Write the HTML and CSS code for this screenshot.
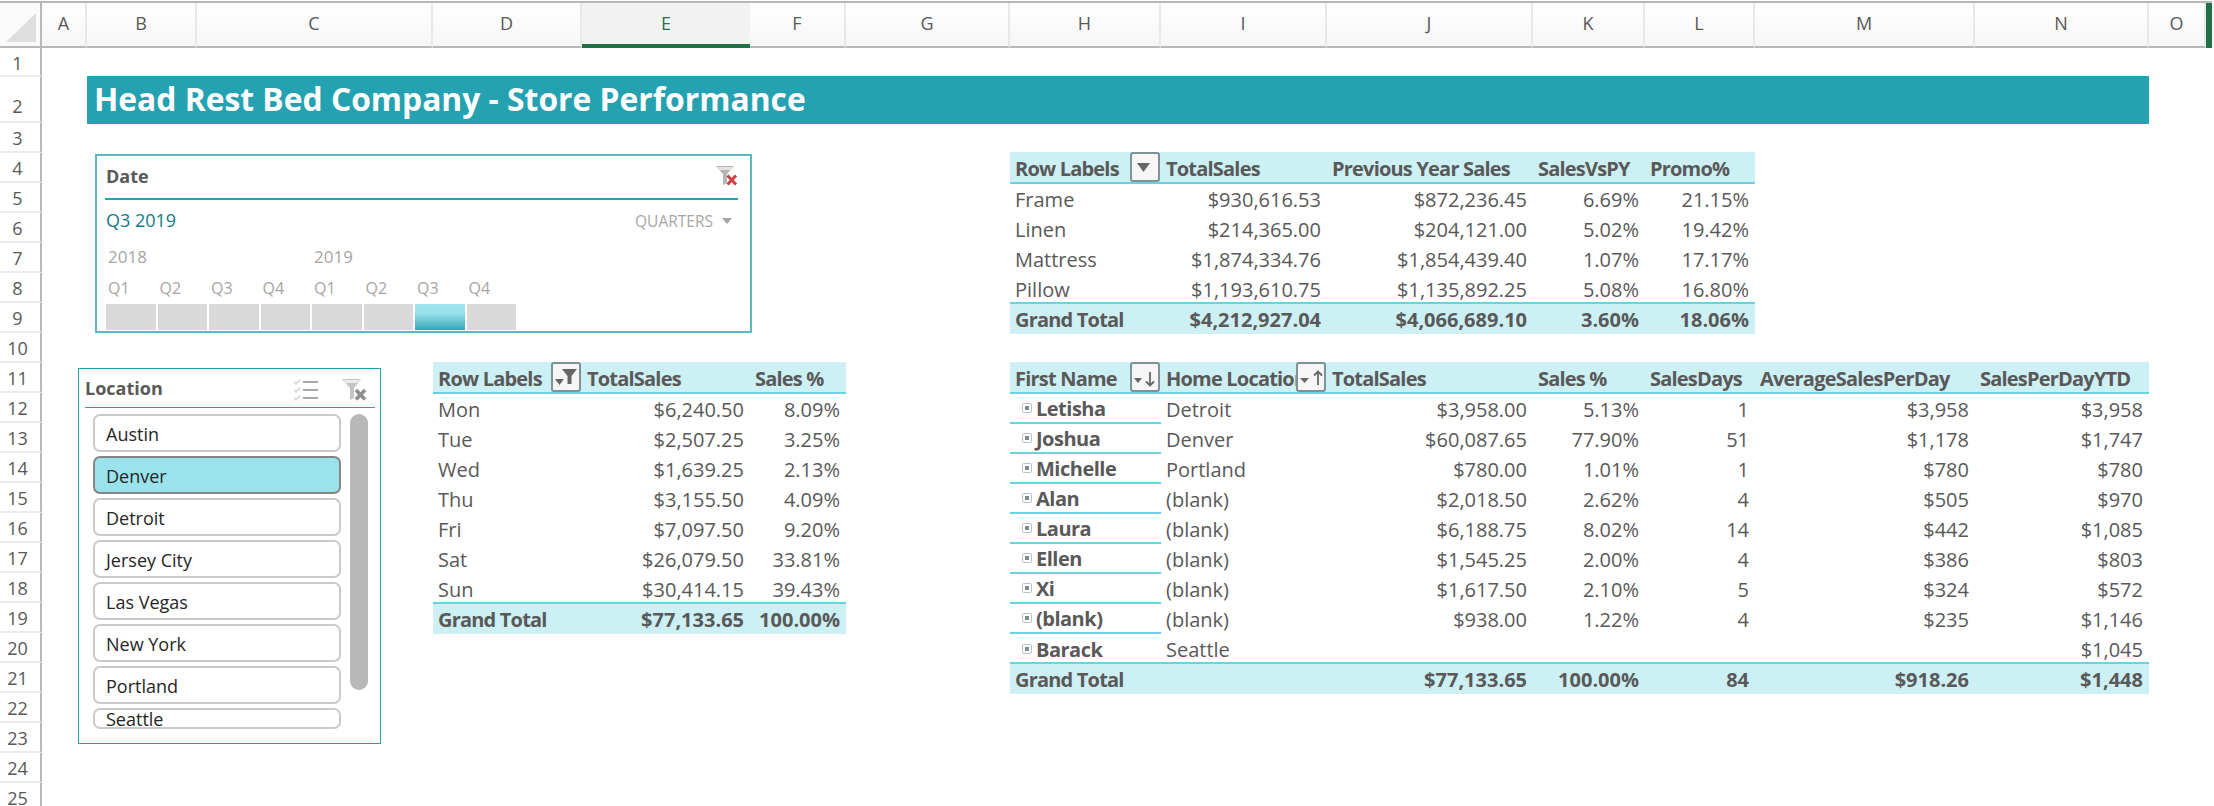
FILE: index.html
```html
<!DOCTYPE html>
<html lang="en">
  <head>
    <meta charset="UTF-8" />
    <title>Store Performance</title>
    <link rel="stylesheet" href="styles.css">
  </head>
  <body>
    <div class="sheet">
      <!-- column headers -->
      <div class="corner">
        <svg width="40" height="45" viewBox="0 0 40 45"><path d="M36 10V39H6Z" fill="#dedede" /></svg>
      </div>
      <div class="col-head">A</div>
      <div class="col-head">B</div>
      <div class="col-head">C</div>
      <div class="col-head">D</div>
      <div class="col-head active">E</div>
      <div class="col-head">F</div>
      <div class="col-head">G</div>
      <div class="col-head">H</div>
      <div class="col-head">I</div>
      <div class="col-head">J</div>
      <div class="col-head">K</div>
      <div class="col-head">L</div>
      <div class="col-head">M</div>
      <div class="col-head">N</div>
      <div class="col-head">O</div>
      <div class="edge"></div>

      <!-- row headers -->
      <div class="row-head">1</div>
      <div class="row-head bottom">2</div>
      <div class="row-head">3</div>
      <div class="row-head">4</div>
      <div class="row-head">5</div>
      <div class="row-head">6</div>
      <div class="row-head">7</div>
      <div class="row-head">8</div>
      <div class="row-head">9</div>
      <div class="row-head">10</div>
      <div class="row-head">11</div>
      <div class="row-head">12</div>
      <div class="row-head">13</div>
      <div class="row-head">14</div>
      <div class="row-head">15</div>
      <div class="row-head">16</div>
      <div class="row-head">17</div>
      <div class="row-head">18</div>
      <div class="row-head">19</div>
      <div class="row-head">20</div>
      <div class="row-head">21</div>
      <div class="row-head">22</div>
      <div class="row-head">23</div>
      <div class="row-head">24</div>
      <div class="row-head">25</div>

      <h1 class="title">Head Rest Bed Company - Store Performance</h1>

      <!-- date timeline slicer -->
      <section class="timeline">
        <div class="timeline-head">
          <span class="slicer-name">Date</span>
          <svg class="clear-icon" width="24" height="22" viewBox="0 0 24 22">
            <path d="M2 1H20L13 9V18L9 20V9Z" fill="#b5b5b5" />
            <path d="M3 2H19L16 5H6Z" fill="#e4e4e4" />
            <path d="M13.500 10.500L22 19.500M22 10.500L13.500 19.500" stroke="#cf3f45" stroke-width="3" />
          </svg>
        </div>
        <div class="timeline-range">
          <span class="range-label">Q3 2019</span>
          <span class="range-level">QUARTERS <i class="level-arrow"></i></span>
        </div>
        <div class="years">
          <span>2018</span>
          <span>2019</span>
        </div>
        <div class="quarters">
          <span>Q1</span><span>Q2</span><span>Q3</span><span>Q4</span>
          <span>Q1</span><span>Q2</span><span>Q3</span><span>Q4</span>
        </div>
        <div class="tiles">
          <i class="tile"></i><i class="tile"></i><i class="tile"></i><i class="tile"></i>
          <i class="tile"></i><i class="tile"></i><i class="tile on"></i><i class="tile"></i>
        </div>
      </section>

      <!-- location slicer -->
      <section class="slicer">
        <div class="slicer-head">
          <span class="slicer-name">Location</span>
          <svg class="multi-icon" width="26" height="22" viewBox="0 0 26 22">
            <path d="M1 3L3 5L7 0.500M1 11L3 13L7 8.500M1 19L3 21L7 16.500" fill="none" stroke="#d4d4d4" stroke-width="1.500" />
            <path d="M10 3H25M10 11H25M10 19H25" stroke="#a8a8a8" stroke-width="2" />
          </svg>
          <svg class="clear-icon" width="26" height="23" viewBox="0 0 26 23">
            <path d="M1 1H20L13 10V20L9 22V10Z" fill="#c4c4c4" />
            <path d="M2 2H19L16 5H5Z" fill="#ececec" />
            <path d="M15 12L24 21.500M24 12L15 21.500" stroke="#8e8e8e" stroke-width="3.500" />
          </svg>
        </div>
        <div class="slicer-body">
          <ul class="items">
            <li class="item">Austin</li>
            <li class="item on">Denver</li>
            <li class="item">Detroit</li>
            <li class="item">Jersey City</li>
            <li class="item">Las Vegas</li>
            <li class="item">New York</li>
            <li class="item">Portland</li>
            <li class="item cut">Seattle</li>
          </ul>
          <div class="scrollbar"></div>
        </div>
      </section>

      <!-- sales by weekday -->
      <div class="pivot pivot-days">
        <div class="row head">
          <span class="cell">Row Labels
            <span class="filter-btn">
              <svg width="26" height="26" viewBox="0 0 26 26">
                <path d="M2 15H11L6.500 21Z" fill="#666" />
                <path d="M9 5H24L18.500 12V20H14.500V12Z" fill="#666" />
              </svg>
            </span>
          </span>
          <span class="cell">TotalSales</span>
          <span class="cell">Sales %</span>
        </div>
        <div class="row"><span class="cell">Mon</span><span class="cell num">$6,240.50</span><span class="cell num">8.09%</span></div>
        <div class="row"><span class="cell">Tue</span><span class="cell num">$2,507.25</span><span class="cell num">3.25%</span></div>
        <div class="row"><span class="cell">Wed</span><span class="cell num">$1,639.25</span><span class="cell num">2.13%</span></div>
        <div class="row"><span class="cell">Thu</span><span class="cell num">$3,155.50</span><span class="cell num">4.09%</span></div>
        <div class="row"><span class="cell">Fri</span><span class="cell num">$7,097.50</span><span class="cell num">9.20%</span></div>
        <div class="row"><span class="cell">Sat</span><span class="cell num">$26,079.50</span><span class="cell num">33.81%</span></div>
        <div class="row"><span class="cell">Sun</span><span class="cell num">$30,414.15</span><span class="cell num">39.43%</span></div>
        <div class="row total"><span class="cell">Grand Total</span><span class="cell num">$77,133.65</span><span class="cell num">100.00%</span></div>
      </div>

      <!-- sales by product -->
      <div class="pivot pivot-products">
        <div class="row head">
          <span class="cell">Row Labels
            <span class="filter-btn">
              <svg width="26" height="26" viewBox="0 0 26 26"><path d="M5 9H18L11.500 18Z" fill="#666" /></svg>
            </span>
          </span>
          <span class="cell">TotalSales</span>
          <span class="cell">Previous Year Sales</span>
          <span class="cell">SalesVsPY</span>
          <span class="cell">Promo%</span>
        </div>
        <div class="row"><span class="cell">Frame</span><span class="cell num">$930,616.53</span><span class="cell num">$872,236.45</span><span class="cell num">6.69%</span><span class="cell num">21.15%</span></div>
        <div class="row"><span class="cell">Linen</span><span class="cell num">$214,365.00</span><span class="cell num">$204,121.00</span><span class="cell num">5.02%</span><span class="cell num">19.42%</span></div>
        <div class="row"><span class="cell">Mattress</span><span class="cell num">$1,874,334.76</span><span class="cell num">$1,854,439.40</span><span class="cell num">1.07%</span><span class="cell num">17.17%</span></div>
        <div class="row"><span class="cell">Pillow</span><span class="cell num">$1,193,610.75</span><span class="cell num">$1,135,892.25</span><span class="cell num">5.08%</span><span class="cell num">16.80%</span></div>
        <div class="row total"><span class="cell">Grand Total</span><span class="cell num">$4,212,927.04</span><span class="cell num">$4,066,689.10</span><span class="cell num">3.60%</span><span class="cell num">18.06%</span></div>
      </div>

      <!-- sales by person -->
      <div class="pivot pivot-people">
        <div class="row head">
          <span class="cell">First Name
            <span class="filter-btn">
              <svg width="26" height="26" viewBox="0 0 26 26">
                <path d="M2 14H10L6 19Z" fill="#666" />
                <path d="M18 8V21M14 17.500L18 21.500L22 17.500" fill="none" stroke="#666" stroke-width="1.800" />
              </svg>
            </span>
          </span>
          <span class="cell">Home Location
            <span class="filter-btn">
              <svg width="26" height="26" viewBox="0 0 26 26">
                <path d="M2 14H11L6.500 19Z" fill="#666" />
                <path d="M20 21V8M16 11.500L20 7.500L24 11.500" fill="none" stroke="#666" stroke-width="1.800" />
              </svg>
            </span>
          </span>
          <span class="cell">TotalSales</span>
          <span class="cell">Sales %</span>
          <span class="cell">SalesDays</span>
          <span class="cell">AverageSalesPerDay</span>
          <span class="cell">SalesPerDayYTD</span>
        </div>
        <div class="row"><span class="cell name"><i class="expand"></i>Letisha</span><span class="cell">Detroit</span><span class="cell num">$3,958.00</span><span class="cell num">5.13%</span><span class="cell num">1</span><span class="cell num">$3,958</span><span class="cell num">$3,958</span></div>
        <div class="row"><span class="cell name"><i class="expand"></i>Joshua</span><span class="cell">Denver</span><span class="cell num">$60,087.65</span><span class="cell num">77.90%</span><span class="cell num">51</span><span class="cell num">$1,178</span><span class="cell num">$1,747</span></div>
        <div class="row"><span class="cell name"><i class="expand"></i>Michelle</span><span class="cell">Portland</span><span class="cell num">$780.00</span><span class="cell num">1.01%</span><span class="cell num">1</span><span class="cell num">$780</span><span class="cell num">$780</span></div>
        <div class="row"><span class="cell name"><i class="expand"></i>Alan</span><span class="cell">(blank)</span><span class="cell num">$2,018.50</span><span class="cell num">2.62%</span><span class="cell num">4</span><span class="cell num">$505</span><span class="cell num">$970</span></div>
        <div class="row"><span class="cell name"><i class="expand"></i>Laura</span><span class="cell">(blank)</span><span class="cell num">$6,188.75</span><span class="cell num">8.02%</span><span class="cell num">14</span><span class="cell num">$442</span><span class="cell num">$1,085</span></div>
        <div class="row"><span class="cell name"><i class="expand"></i>Ellen</span><span class="cell">(blank)</span><span class="cell num">$1,545.25</span><span class="cell num">2.00%</span><span class="cell num">4</span><span class="cell num">$386</span><span class="cell num">$803</span></div>
        <div class="row"><span class="cell name"><i class="expand"></i>Xi</span><span class="cell">(blank)</span><span class="cell num">$1,617.50</span><span class="cell num">2.10%</span><span class="cell num">5</span><span class="cell num">$324</span><span class="cell num">$572</span></div>
        <div class="row"><span class="cell name"><i class="expand"></i>(blank)</span><span class="cell">(blank)</span><span class="cell num">$938.00</span><span class="cell num">1.22%</span><span class="cell num">4</span><span class="cell num">$235</span><span class="cell num">$1,146</span></div>
        <div class="row"><span class="cell name last"><i class="expand"></i>Barack</span><span class="cell">Seattle</span><span class="cell num"></span><span class="cell num"></span><span class="cell num"></span><span class="cell num"></span><span class="cell num">$1,045</span></div>
        <div class="row total"><span class="cell">Grand Total</span><span class="cell"></span><span class="cell num">$77,133.65</span><span class="cell num">100.00%</span><span class="cell num">84</span><span class="cell num">$918.26</span><span class="cell num">$1,448</span></div>
      </div>
    </div>
  </body>
</html>
```

FILE: styles.css
```css
* {
  box-sizing: border-box;
  margin: 0px;
  padding: 0px;
}

html, body {
  height: 100%;
  overflow: hidden;
}

body {
  background-color: #fff;
  color: #595959;
  font-family: "Open Sans", sans-serif;
  font-size: 20px;
}

.sheet {
  display: grid;
  width: 2212px;
  margin-top: 1px;
  border-top: 2px solid #b8b8b8;
  grid-template-columns: 42px 45px 110px 236px 149px 168px 96px 164px 151px 166px 206px 112px 110px 220px 174px 57px 6px;
  grid-template-rows: 45px 29px 46px repeat(23, 30px);
}

/* headers */
.corner {
  grid-column: 1;
  grid-row: 1;
  background-color: #fafafa;
  border-right: 2px solid #b8b8b8;
  border-bottom: 2px solid #b8b8b8;
}

.col-head {
  grid-row: 1;
  background: linear-gradient(#fff, #f6f6f6);
  border-right: 2px solid #e8e8e8;
  border-bottom: 2px solid #b8b8b8;
  text-align: center;
  font-size: 18px;
  line-height: 41px;
}

.col-head.active {
  background: #f2f2f2;
  border-right: none;
  border-bottom: 4px solid #1f7246;
  color: #1f7246;
}

.edge {
  grid-row: 1;
  background-color: #1f7246;
}

.row-head {
  grid-column: 1;
  padding-right: 5px;
  background-color: #fff;
  border-right: 2px solid #b8b8b8;
  border-bottom: 2px solid #ececec;
  text-align: center;
  font-size: 18px;
  line-height: 30px;
}

.row-head.bottom {
  padding-top: 14px;
}

.title {
  grid-column: 3 / 16;
  grid-row: 3;
  margin: -1px 0px;
  padding-left: 7px;
  background-color: #24a2b1;
  color: #fff;
  font-size: 31.800px;
  font-weight: 700;
  line-height: 45px;
}

/* date slicer */
.timeline {
  grid-column: 3 / 7;
  grid-row: 5 / 11;
  margin: 1px -2px 0px 8px;
  padding: 0px 12px 0px 8px;
  border: 2px solid #5ab9c4;
}

.timeline-head {
  display: flex;
  align-items: center;
  justify-content: space-between;
  height: 44px;
  padding-bottom: 2px;
  border-bottom: 2px solid #24a2b1;
}

.slicer-name {
  padding-left: 1px;
  font-size: 18px;
  font-weight: 700;
}

.timeline-range {
  display: flex;
  align-items: center;
  justify-content: space-between;
  height: 42px;
  padding: 0px 0px 2px 1px;
  font-size: 18px;
}

.range-label {
  color: #0f7b87;
}

.range-level {
  display: flex;
  align-items: center;
  gap: 9px;
  padding: 2px 6px 0px 0px;
  color: #a6a6a6;
  font-size: 15.500px;
}

.level-arrow {
  border-top: 6px solid #a6a6a6;
  border-left: 5px solid transparent;
  border-right: 5px solid transparent;
}

.years {
  display: flex;
  padding-left: 3px;
  color: #a6a6a6;
  font-size: 17px;
  line-height: 30px;
}

.years span {
  width: 206px;
}

.quarters {
  display: flex;
  padding-left: 3px;
  color: #a6a6a6;
  font-size: 16px;
  line-height: 32px;
}

.quarters span {
  width: 51.500px;
}

.tiles {
  display: flex;
  gap: 2px;
  padding-left: 1px;
}

.tile {
  width: 49.500px;
  height: 26px;
  background-color: #d9d9d9;
}

.tile.on {
  background: linear-gradient(#a0e5ed, #98e1ea 35%, #35a7b6);
}

/* location slicer */
.slicer {
  grid-column: 2 / 5;
  grid-row: 12 / 25;
  margin: 5px 52px 9px 36px;
  padding: 0px 5px 0px 6px;
  border: 1px solid #24a2b1;
}

.slicer-head {
  display: flex;
  align-items: center;
  height: 39px;
  padding-right: 8px;
  border-bottom: 1px solid #24a2b1;
}

.slicer-head .slicer-name {
  padding-left: 0px;
  margin-right: auto;
}

.slicer-head svg {
  margin-top: 3px;
}

.multi-icon {
  margin-right: 22px;
}

.slicer-body {
  display: flex;
  gap: 9px;
  padding: 6px 7px 0px 8px;
}

.items {
  display: flex;
  flex-direction: column;
  gap: 4px;
  width: 248px;
  list-style: none;
}

.item {
  height: 38px;
  padding-left: 11px;
  background-color: #fff;
  border: 2px solid #cacaca;
  border-radius: 7px;
  color: #262626;
  font-size: 18px;
  line-height: 36px;
}

.item.on {
  background-color: #9be3ec;
  border-color: #858585;
}

.item.cut {
  height: 21px;
  line-height: 18px;
}

.scrollbar {
  width: 18px;
  height: 276px;
  background-color: #b8b8b8;
  border-radius: 9px;
}

/* pivot tables */
.pivot {
  display: grid;
  grid-template-columns: subgrid;
  grid-auto-rows: min-content;
  margin-top: -1px;
}

.pivot-days {
  grid-column: 5 / 8;
  grid-row: 12 / 20;
}

.pivot-products {
  grid-column: 9 / 14;
  grid-row: 5 / 11;
}

.pivot-people {
  grid-column: 9 / 16;
  grid-row: 12 / 23;
}

.row {
  display: grid;
  grid-column: 1 / -1;
  grid-template-columns: subgrid;
  height: 30px;
  line-height: 31px;
}

.row.head {
  height: 32px;
  background-color: #ccf0f4;
  border-bottom: 2px solid #66d5df;
  font-weight: 700;
  letter-spacing: -0.800px;
  line-height: 34px;
}

.row.total {
  height: 32px;
  margin-top: -2px;
  background-color: #ccf0f4;
  border-top: 2px solid #66d5df;
  font-weight: 700;
  letter-spacing: -0.800px;
}

.row.total .num {
  letter-spacing: 0px;
}

.cell {
  position: relative;
  padding: 0px 6px 0px 5px;
  overflow: hidden;
  white-space: nowrap;
}

.cell.num {
  text-align: right;
}

.cell.name {
  display: flex;
  align-items: center;
  gap: 4px;
  padding-left: 12px;
  border-bottom: 2px solid #66d5df;
  font-weight: 700;
  letter-spacing: -0.500px;
}

.cell.name.last {
  border-bottom: none;
}

.expand {
  position: relative;
  width: 10px;
  height: 10px;
  border: 1px solid #b6c4c8;
  border-radius: 2px;
}

.expand::after {
  content: "";
  position: absolute;
  left: 2px;
  top: 2px;
  width: 4px;
  height: 4px;
  background-color: #7d8a8e;
}

.filter-btn {
  position: absolute;
  top: 0px;
  right: 1px;
  width: 30px;
  height: 30px;
  background-color: #f6f6f6;
  border: 2px solid #7f9296;
  border-radius: 3px;
}

.filter-btn svg {
  display: block;
}
```
